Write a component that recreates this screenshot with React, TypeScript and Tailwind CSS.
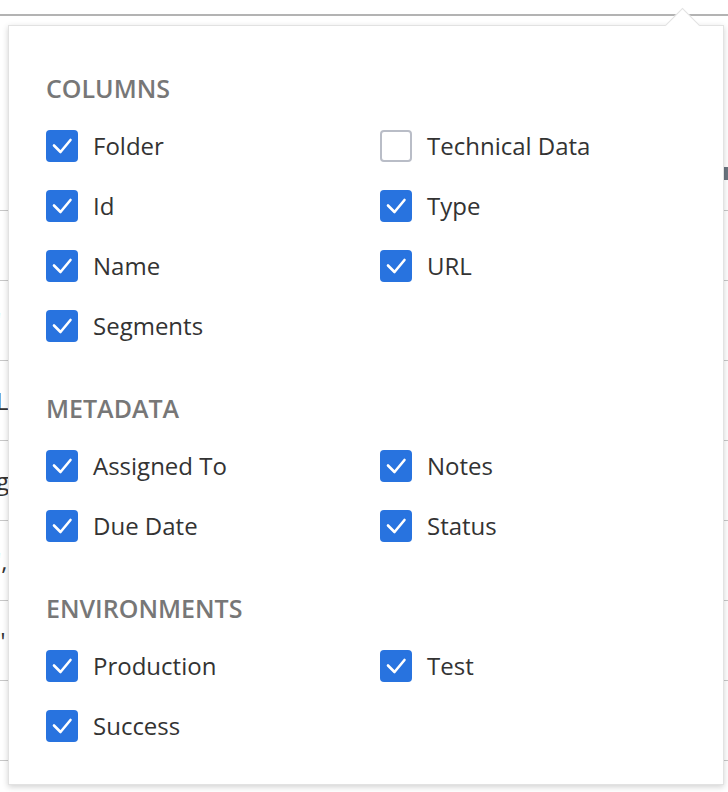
import React from "react";

type Item = { label: string; checked: boolean };

const sections: { title: string; items: (Item | null)[] }[] = [
  {
    title: "COLUMNS",
    items: [
      { label: "Folder", checked: true },
      { label: "Technical Data", checked: false },
      { label: "Id", checked: true },
      { label: "Type", checked: true },
      { label: "Name", checked: true },
      { label: "URL", checked: true },
      { label: "Segments", checked: true },
    ],
  },
  {
    title: "METADATA",
    items: [
      { label: "Assigned To", checked: true },
      { label: "Notes", checked: true },
      { label: "Due Date", checked: true },
      { label: "Status", checked: true },
    ],
  },
  {
    title: "ENVIRONMENTS",
    items: [
      { label: "Production", checked: true },
      { label: "Test", checked: true },
      { label: "Success", checked: true },
    ],
  },
];

function Box({ checked }: { checked: boolean }) {
  if (!checked) {
    return (
      <span className="block w-8 h-8 shrink-0 rounded-[4px] border-2 border-[#b9bdc7] bg-white" />
    );
  }
  return (
    <span className="flex w-8 h-8 shrink-0 rounded-[4px] bg-[#2873df] items-center justify-center">
      <svg width="32" height="32" viewBox="0 0 32 32" fill="none">
        <polyline
          points="8,15.5 14.5,22 24.5,10"
          stroke="white"
          strokeWidth="2.6"
          strokeLinecap="round"
          strokeLinejoin="round"
        />
      </svg>
    </span>
  );
}

const bgRows = [
  { h: "h-[70px]", t: "" },
  { h: "h-[80px]", t: "'" },
  { h: "h-[80px]", t: "L" },
  { h: "h-[80px]", t: "g" },
  { h: "h-[80px]", t: "'," },
  { h: "h-[80px]", t: "\"" },
  { h: "h-[80px]", t: "" },
];

export default function App() {
  return (
    <div
      className="relative w-[728px] h-[792px] overflow-hidden bg-white text-[#333]"
      style={{ fontFamily: '"Open Sans", "Noto Sans", sans-serif' }}
    >
      {/* background table */}
      <div className="w-full">
        <div className="h-[16px] border-b-2 border-[#b3b3b3]" />
        <div className="h-[195px] border-b border-[#c8c8c8] relative">
          <div className="absolute right-0 top-[151px] w-[4px] h-[13px] bg-[#6b7681]" />
        </div>
        {bgRows.map((r, i) => (
          <div
            key={i}
            className={`${r.h} border-b border-[#c8c8c8] flex items-center text-[24px] leading-none text-[#333] -ml-[4px]`}
          >
            {r.t}
          </div>
        ))}
      </div>

      {/* popover */}
      <div className="absolute left-[8px] top-[25px] w-[716px] bg-white border border-[#e2e2e2] shadow-[0_2px_6px_rgba(0,0,0,0.18)] pt-[46px] pb-[42px] pl-[37px]">
        <div className="absolute left-[661px] -top-[13px] w-[25px] h-[25px] rotate-45 bg-white border-l border-t border-[#e2e2e2]" />
        <div className="relative flex flex-col gap-[50px]">
          {sections.map((s) => (
            <div key={s.title}>
              <div className="text-[25px] leading-[32px] font-semibold text-[#777] mb-[26px]">
                {s.title}
              </div>
              <div className="grid grid-cols-[334px_1fr] gap-y-[28px]">
                {s.items.map((it, i) =>
                  it ? (
                    <div key={i} className="flex items-center gap-[15px] h-8">
                      <Box checked={it.checked} />
                      <span className="text-[24px] leading-[32px] text-[#333]">{it.label}</span>
                    </div>
                  ) : (
                    <div key={i} />
                  )
                )}
              </div>
            </div>
          ))}
        </div>
      </div>
    </div>
  );
}
